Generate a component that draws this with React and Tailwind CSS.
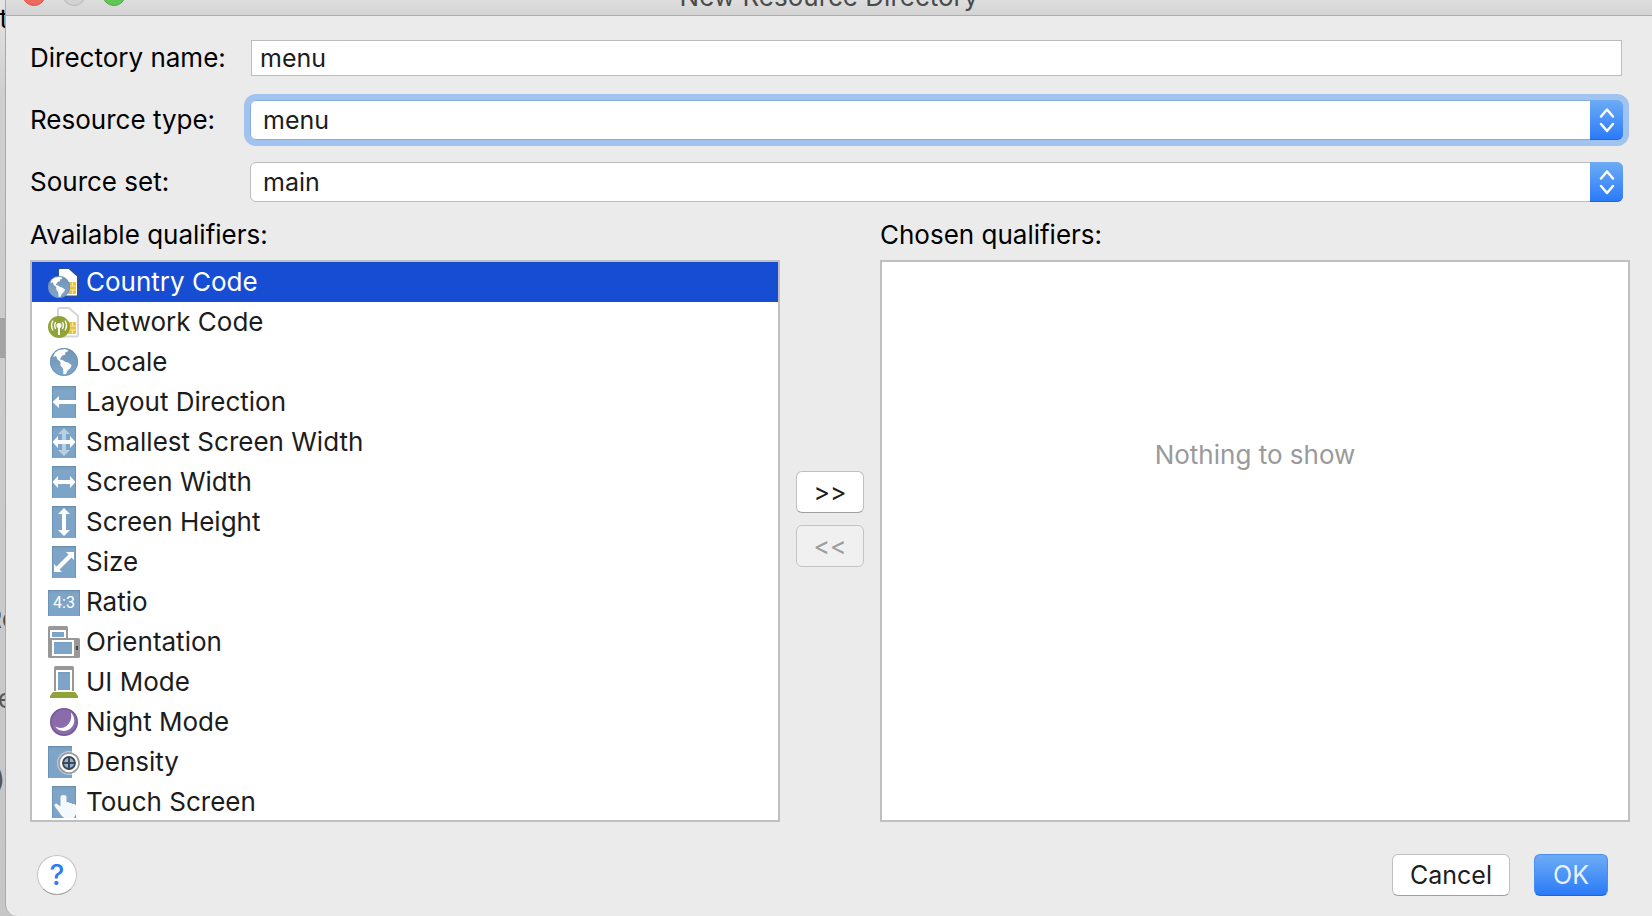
import { useState } from 'react'

const CONTINENTS =
  'M5 11 L7 6.5 L11 4 L17 3 L20.5 4.5 L19 6 L17 6.5 L17.5 8.5 L14.5 9.5 L12.5 12 L12 13.5 L14.5 14 L17.5 16 L20 16.5 L23.5 19 L22.5 22 L19.5 24.5 L18 28 L15.5 28.5 L15 22.5 L12.5 19.5 L12.5 16 L9.5 13.5 L8 10 Z'

function Globe() {
  return (
    <>
      <circle cx="16" cy="16" r="14" fill="url(#globe)" />
      <circle cx="16" cy="16" r="13.5" fill="none" stroke="#5f8db2" strokeOpacity="0.6" />
      <path d={CONTINENTS} fill="#fff" />
    </>
  )
}

function Sim({ outline }) {
  return (
    <>
      <path
        d="M12 2 H21 L30 10 V29 Q30 30.5 28.5 30.5 H12 Q10 30.5 10 29 V4 Q10 2 12 2 Z"
        fill="#fff"
        stroke={outline}
        strokeWidth="2"
      />
      <rect x="20" y="16" width="8" height="12" rx="1" fill="#e9c23f" />
      <path d="M20 20 H28 M20 24 H28 M24.500 16 V20 M24.500 24 V28" stroke="#f7e7a0" strokeWidth="1" />
    </>
  )
}

function Screen({ children }) {
  return (
    <>
      <rect x="4" width="24" height="32" fill="url(#screen)" />
      <path d="M4.500 32 V0.500 H27.500 V32" fill="none" stroke="#5f86a8" strokeOpacity="0.55" />
      {children}
    </>
  )
}

const H_ARROW = 'M4.500 16 L10 10 V14 H22 V10 L27.500 16 L22 22 V18 H10 V22 Z'
const V_ARROW = 'M16 2 L22 8 H18 V24 H22 L16 30 L10 24 H14 V8 H10 Z'

const icons = {
  country: (
    <>
      <Sim outline="#2b4f9c" />
      <g transform="translate(-1.600 8.400) scale(0.790)">
        <Globe />
      </g>
    </>
  ),
  network: (
    <>
      <Sim outline="#d6d6d8" />
      <circle cx="11" cy="21" r="11" fill="#8fa336" />
      <circle cx="11" cy="19.500" r="2.600" fill="#fff" />
      <path d="M11 20 V29" stroke="#fff" strokeWidth="2" />
      <path
        d="M7.700 16 Q5.600 19.500 7.700 23 M14.300 16 Q16.400 19.500 14.300 23 M5 14.500 Q2 19.500 5 24.500 M17 14.500 Q20 19.500 17 24.500"
        fill="none"
        stroke="#fff"
        strokeWidth="1.400"
      />
    </>
  ),
  locale: <Globe />,
  direction: (
    <Screen>
      <path d="M4.500 16 L11 10 V14 H28 V18 H11 V22 Z" fill="#fff" />
    </Screen>
  ),
  smallest: (
    <Screen>
      <path d={V_ARROW} fill="#b9d0e3" />
      <path d={H_ARROW} fill="#fff" />
    </Screen>
  ),
  width: (
    <Screen>
      <path d={H_ARROW} fill="#fff" />
    </Screen>
  ),
  height: (
    <Screen>
      <path d={V_ARROW} fill="#fff" />
    </Screen>
  ),
  size: (
    <Screen>
      <path d="M18 6 H26 V14 L23.500 11.500 L11.500 23.500 L14 26 H6 V18 L8.500 20.500 L20.500 8.500 Z" fill="#fff" />
    </Screen>
  ),
  ratio: (
    <>
      <rect y="4" width="32" height="26" fill="url(#screen)" />
      <path d="M0.500 30 V4.500 H31.500 V30" fill="none" stroke="#5f86a8" strokeOpacity="0.55" />
      <text x="16" y="22" textAnchor="middle" fill="#fff" className="font-['Roboto',sans-serif] text-[16px]">
        4:3
      </text>
    </>
  ),
  orientation: (
    <>
      <rect width="20" height="16" rx="1.500" fill="#989898" />
      <rect x="2" y="4" width="16" height="8" fill="#fff" />
      <rect x="4" y="6" width="12" height="5" fill="url(#screen)" />
      <rect y="12" width="32" height="20" rx="1.500" fill="#989898" />
      <rect x="4" y="14" width="22" height="16" fill="#fff" />
      <rect x="6" y="16" width="18" height="12" fill="url(#screen)" />
      <rect x="28" y="20" width="2" height="4" fill="#444" />
    </>
  ),
  uiMode: (
    <>
      <path d="M6 25 V2 Q6 0 8 0 H24 Q26 0 26 2 V25 Z" fill="#989898" />
      <rect x="8" y="4" width="16" height="21" fill="#fff" />
      <rect x="10" y="6" width="12" height="18" fill="url(#screen)" />
      <path d="M5 26 H27 L30 30 V32 H2 V30 Z" fill="#8fa336" />
    </>
  ),
  night: (
    <>
      <circle cx="16" cy="16" r="13.200" fill="#8b6bab" stroke="#74599a" strokeWidth="1.600" />
      <path d="M23 6.500 Q28 12 25.500 18.500 Q22.500 25 15.500 25 Q10 24.500 7 20.500 Q13.500 23.500 18.500 20 Q24.500 15.500 23 6.500 Z" fill="#fff" />
    </>
  ),
  density: (
    <>
      <rect width="24" height="32" fill="url(#screen)" />
      <path d="M0.500 32 V0.500 H24" fill="none" stroke="#5f86a8" strokeOpacity="0.55" />
      <circle cx="21" cy="17" r="12" fill="#fff" fillOpacity="0.45" />
      <circle cx="21" cy="17" r="10" fill="#fff" stroke="#989898" strokeWidth="1.600" />
      <circle cx="21" cy="17" r="6" fill="#8fb4d6" stroke="#3d4852" strokeWidth="1.800" />
      <path d="M21 10.500 V23.500 M14.500 17 H27.500" stroke="#3d4852" strokeWidth="2" />
    </>
  ),
  touch: (
    <Screen>
      <path
        d="M12.500 11 Q12.500 9 15.500 9 Q18.500 9 18.500 11 V16.500 Q20 15.500 21.500 17 Q23.500 16.500 24.500 18 Q26.500 17.500 28 19 V28 L26 32 H16 Q13 29.500 11 26 L6.500 20 Q6 17.500 8.500 17.500 L12.500 20.500 Z"
        fill="#fff"
        fillOpacity="0.93"
      />
    </Screen>
  ),
}

const qualifiers = [
  { label: 'Country Code', icon: 'country' },
  { label: 'Network Code', icon: 'network' },
  { label: 'Locale', icon: 'locale' },
  { label: 'Layout Direction', icon: 'direction' },
  { label: 'Smallest Screen Width', icon: 'smallest' },
  { label: 'Screen Width', icon: 'width' },
  { label: 'Screen Height', icon: 'height' },
  { label: 'Size', icon: 'size' },
  { label: 'Ratio', icon: 'ratio' },
  { label: 'Orientation', icon: 'orientation' },
  { label: 'UI Mode', icon: 'uiMode' },
  { label: 'Night Mode', icon: 'night' },
  { label: 'Density', icon: 'density' },
  { label: 'Touch Screen', icon: 'touch' },
]

function IconDefs() {
  return (
    <svg className="absolute size-0" aria-hidden="true">
      <defs>
        <linearGradient id="screen" x1="0" y1="0" x2="0" y2="1">
          <stop offset="0" stopColor="#7699b8" />
          <stop offset="0.15" stopColor="#7fa5c7" />
          <stop offset="1" stopColor="#7ba4c8" />
        </linearGradient>
        <linearGradient id="globe" x1="0" y1="0" x2="0" y2="1">
          <stop offset="0" stopColor="#7094b4" />
          <stop offset="1" stopColor="#7fa6ca" />
        </linearGradient>
      </defs>
    </svg>
  )
}

function ComboBox({ id, options, focused }) {
  return (
    <div className={`relative flex-1 rounded-md ${focused ? 'ring-6 ring-[#a0c3ef]' : ''}`}>
      <select
        id={id}
        className={`block h-10 w-full appearance-none rounded-md border bg-white px-3 text-[25px] text-[#1c1c1c] outline-none ${
          focused ? 'border-[#86abdc]' : 'border-[#bcbcbc]'
        }`}
      >
        {options.map((option) => (
          <option key={option}>{option}</option>
        ))}
      </select>
      <span className="pointer-events-none absolute inset-y-0 right-0 flex w-[33px] items-center justify-center rounded-r-md border-b border-[#2462d8] bg-linear-to-b from-[#6cabf5] to-[#2a7af8]">
        <svg viewBox="0 0 16 26" className="h-[26px] w-4" fill="none" stroke="#fff" strokeWidth="2.500" strokeLinecap="round" strokeLinejoin="round">
          <path d="M2 9.500 L8 2.500 L14 9.500 M2 17 L8 24 L14 17" />
        </svg>
      </span>
    </div>
  )
}

function Backdrop() {
  return (
    <div className="relative w-[5px] shrink-0 overflow-hidden bg-linear-to-b from-[#e4e4e4] via-[#cfcfcf] via-10% to-[#c6c6c6] text-[#555]" aria-hidden="true">
      <span className="absolute top-1 right-[-3px] text-black">t</span>
      <span className="absolute top-[318px] h-10 w-full bg-[#a3a3a3]" />
      <span className="absolute top-[604px] right-[-12px]">Re</span>
      <span className="absolute top-[684px] right-[-8px]">e</span>
      <span className="absolute top-[764px] right-0">)</span>
    </div>
  )
}

export default function App() {
  const [selected, setSelected] = useState('Country Code')

  return (
    <div className="flex h-screen bg-[#c6c6c6] font-['Inter','Liberation_Sans',sans-serif] text-[26px] leading-[30px] text-[#1c1c1c]">
      <IconDefs />
      <Backdrop />

      <main className="flex min-w-0 flex-1 flex-col overflow-hidden rounded-bl-xl border-l border-[#a9a9a9] bg-[#ebebeb]">
        {/* Title bar */}
        <header className="relative flex h-4 shrink-0 items-end justify-center border-b border-[#adadad] bg-linear-to-b from-[#dedede] to-[#d3d3d3]">
          <div className="absolute bottom-[9px] left-4 flex gap-4">
            <span className="size-6 rounded-full border border-[#d9574c] bg-[#ee6a5e]" />
            <span className="size-6 rounded-full border border-[#b9b9b9] bg-[#d2d2d2]" />
            <span className="size-6 rounded-full border border-[#54ac43] bg-[#61c654]" />
          </div>
          <h1 className="pb-[3px] text-[#4a4a4a]">New Resource Directory</h1>
        </header>

        {/* Form */}
        <div className="flex flex-col gap-[22px] pt-[22px] pr-[30px] pl-6 text-black">
          <div className="flex h-10 items-center">
            <label htmlFor="directory-name" className="w-[221px] shrink-0">
              Directory name:
            </label>
            <input
              id="directory-name"
              type="text"
              defaultValue="menu"
              className="h-9 min-w-0 flex-1 border border-[#bcbcbc] bg-white px-2 text-[25px] text-[#1c1c1c] outline-none"
            />
          </div>
          <div className="-mr-px flex h-10 items-center">
            <label htmlFor="resource-type" className="w-[220px] shrink-0">
              Resource type:
            </label>
            <ComboBox id="resource-type" options={['menu', 'layout', 'values']} focused />
          </div>
          <div className="-mr-px flex h-10 items-center">
            <label htmlFor="source-set" className="w-[220px] shrink-0">
              Source set:
            </label>
            <ComboBox id="source-set" options={['main', 'debug', 'release']} />
          </div>
        </div>

        {/* Qualifier lists */}
        <div className="flex min-h-0 flex-1 gap-4 pt-[18px] pr-[22px] pl-6">
          <section className="flex min-w-0 flex-1 flex-col gap-[10px]">
            <h2 id="available" className="text-black">Available qualifiers:</h2>
            <ul
              role="listbox"
              aria-labelledby="available"
              className="min-h-0 flex-1 overflow-hidden border-2 border-[#bfbfbf] bg-white"
            >
              {qualifiers.map(({ label, icon }) => (
                <li
                  key={label}
                  role="option"
                  aria-selected={selected === label}
                  onClick={() => setSelected(label)}
                  className={`flex h-10 items-center gap-1.5 pl-4 ${
                    selected === label ? 'bg-[#164dd2] text-white' : ''
                  }`}
                >
                  <svg viewBox="0 0 32 32" className="size-8 shrink-0" aria-hidden="true">
                    {icons[icon]}
                  </svg>
                  {label}
                </li>
              ))}
            </ul>
          </section>

          <div className="flex w-[68px] shrink-0 flex-col justify-center gap-3 pb-1 text-[25px]">
            <button type="button" className="h-[42px] rounded-md border border-[#c0c0c0] border-b-[#a0a0a0] bg-white">
              &gt;&gt;
            </button>
            <button type="button" disabled className="h-[42px] rounded-md border border-[#c4c4c4] bg-[#f0f0f0] text-[#9c9c9c]">
              &lt;&lt;
            </button>
          </div>

          <section className="flex min-w-0 flex-1 flex-col gap-[10px]">
            <h2 className="text-black">Chosen qualifiers:</h2>
            <div className="min-h-0 flex-1 border-2 border-[#bfbfbf] bg-white pt-[178px] text-center text-[#9a9a9a]">
              Nothing to show
            </div>
          </section>
        </div>

        {/* Actions */}
        <footer className="flex shrink-0 items-center gap-6 pt-8 pr-11 pb-5 pl-[31px] text-[25px]">
          <button
            type="button"
            aria-label="Help"
            className="mr-auto size-10 rounded-full border border-[#c4c4c4] border-b-[#a0a0a0] bg-white text-[28px] font-medium text-[#2f7bf0]"
          >
            ?
          </button>
          <button type="button" className="h-[42px] w-[118px] rounded-md border border-[#c0c0c0] border-b-[#a0a0a0] bg-white">
            Cancel
          </button>
          <button
            type="button"
            className="h-[42px] w-[74px] rounded-md border border-[#4a8ef0] border-b-[#2462d8] bg-linear-to-b from-[#6cabf5] to-[#2a7af8] text-[#e9f1fe]"
          >
            OK
          </button>
        </footer>
      </main>
    </div>
  )
}
